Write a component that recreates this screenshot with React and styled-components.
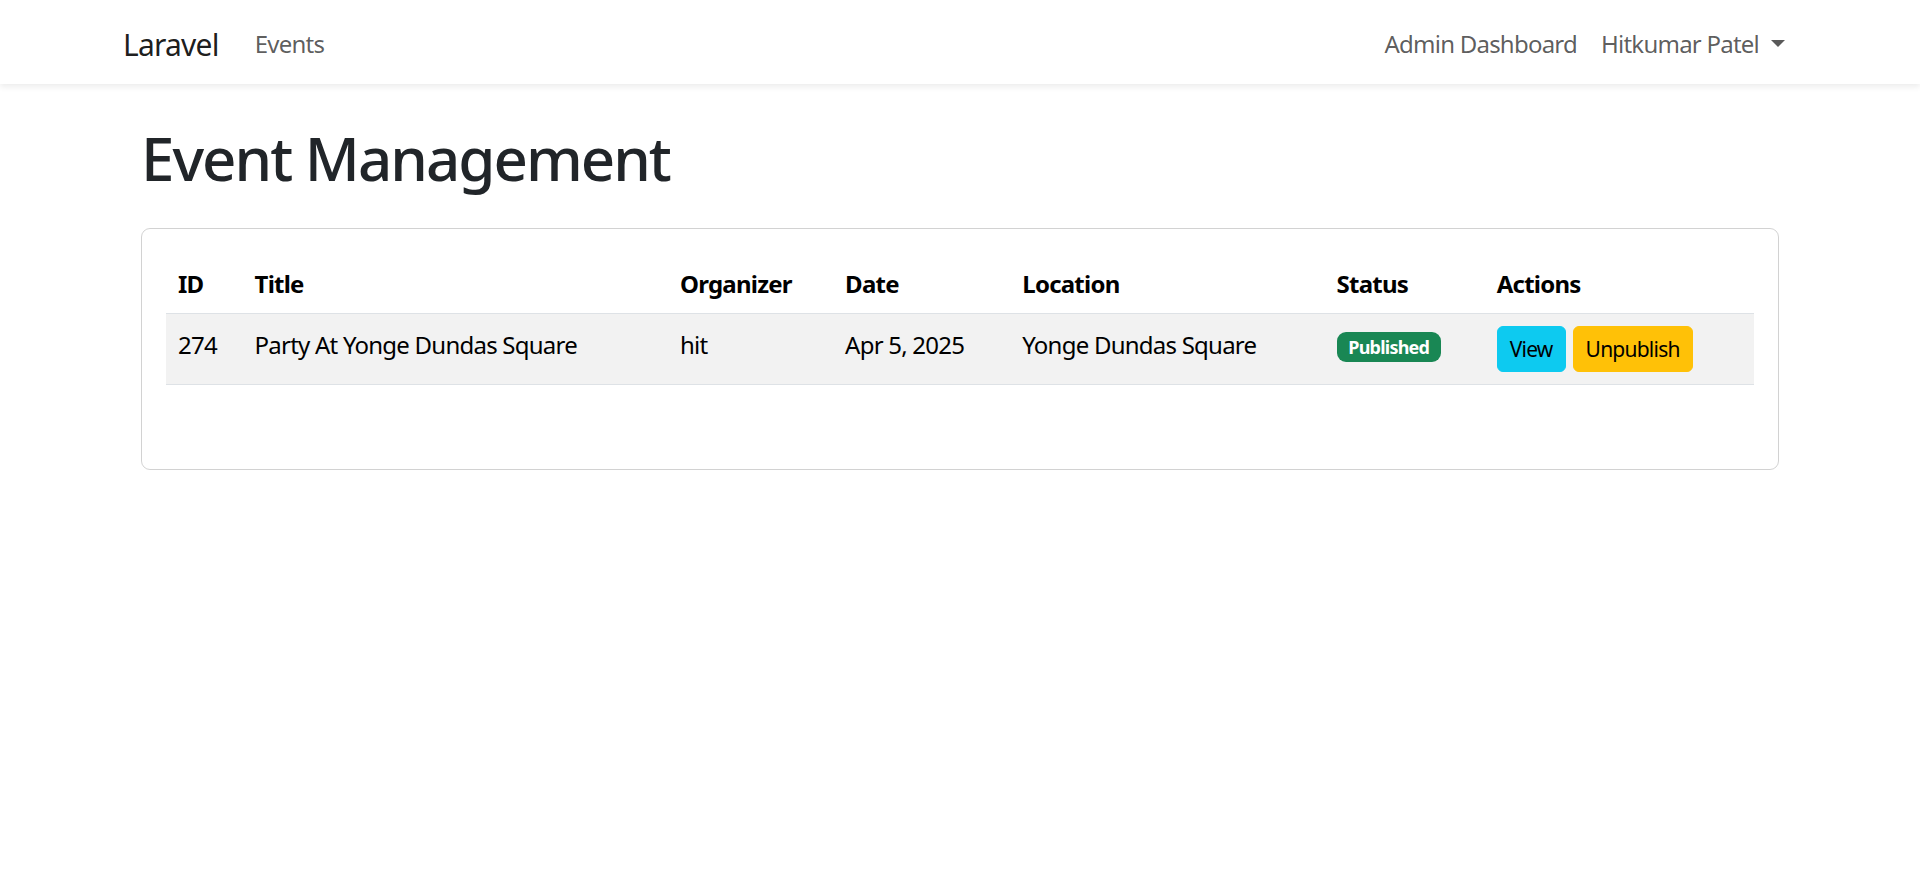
import React from 'react'
import styled, { createGlobalStyle } from 'styled-components';

const GlobalStyle = createGlobalStyle`
  * { box-sizing: border-box; }
  body {
    margin: 0;
    font-family: "Noto Sans", "Open Sans", Arial, sans-serif;
    font-size: 24px;
    line-height: 1.5;
    letter-spacing: -0.032em;
    color: #212529;
    background: #fff;
  }
`;

const Navbar = styled.nav`
  background: #fff;
  padding: 14px 0 10px;
  box-shadow: 0 3px 6px rgba(0, 0, 0, 0.075);
`;

const Container = styled.div`
  width: 100%;
  max-width: 1710px;
  margin: 0 auto;
  padding: 0 18px;
  display: ${p => (p.$flex ? 'flex' : 'block')};
  align-items: center;
  justify-content: space-between;
`;

const NavGroup = styled.div`
  display: flex;
  align-items: center;
`;

const Brand = styled.a`
  font-size: 30px;
  padding: 7.5px 0;
  margin-right: 24px;
  color: rgba(0, 0, 0, 0.9);
  text-decoration: none;
`;

const NavLink = styled.a`
  padding: 12px;
  color: rgba(0, 0, 0, 0.65);
  text-decoration: none;
  display: flex;
  align-items: center;
`;

const Caret = styled.span`
  display: inline-block;
  margin-left: 12px;
  margin-top: -2px;
  border-top: 7px solid;
  border-left: 7px solid transparent;
  border-right: 7px solid transparent;
`;

const Main = styled.main`
  padding: 36px 0;
`;

const Title = styled.h1`
  font-size: 60px;
  font-weight: 500;
  line-height: 1.2;
  letter-spacing: -0.033em;
  margin: 0 0 36px;
  padding-top: 2px;
  height: 72px;
`;

const Card = styled.div`
  border: 1px solid rgba(0, 0, 0, 0.175);
  border-radius: 9px;
  padding: 24px;
`;

const Table = styled.table`
  width: 100%;
  border-collapse: collapse;
  table-layout: fixed;
  color: #000;
  margin-bottom: 24px;
  vertical-align: top;
`;

const Th = styled.th`
  text-align: left;
  font-weight: 700;
  padding: 13px 12px 11px;
  border-bottom: 1px solid #dee2e6;
`;

const Row = styled.tr`
  background: ${p => (p.$striped ? '#f2f2f2' : 'transparent')};
`;

const Td = styled.td`
  padding: 12px;
  border-bottom: 1px solid #dee2e6;
  vertical-align: top;
`;

const Cell = styled.div`
  padding-top: 1px;
`;

const Badge = styled.span`
  display: inline-block;
  font-size: 18px;
  font-weight: 700;
  line-height: 1;
  padding: 6.3px 11.7px;
  border-radius: 9px;
  color: #fff;
  background: #198754;
`;

const Actions = styled.div`
  display: flex;
  gap: 7px;
`;

const Button = styled.button`
  font-family: inherit;
  letter-spacing: inherit;
  font-size: 21px;
  line-height: 1.5;
  padding: 7px 12px 5px;
  border: 1px solid ${p => p.$bg};
  border-radius: 6px;
  background: ${p => p.$bg};
  color: #000;
  cursor: pointer;
`;

const Pager = styled.div`
  height: 36px;
`;

const columns = [
  { label: 'ID', width: 76.5 },
  { label: 'Title', width: 425 },
  { label: 'Organizer', width: 165 },
  { label: 'Date', width: 177 },
  { label: 'Location', width: 314 },
  { label: 'Status', width: 160 },
  { label: 'Actions', width: 269 },
];

const events = [
  {
    id: 274,
    title: 'Party At Yonge Dundas Square',
    organizer: 'hit',
    date: 'Apr 5, 2025',
    location: 'Yonge Dundas Square',
    status: 'Published',
  },
];

function App() {
  return (
    <>
      <GlobalStyle />
      <Navbar>
        <Container $flex>
          <NavGroup>
            <Brand href="#">Laravel</Brand>
            <NavLink href="#">Events</NavLink>
          </NavGroup>
          <NavGroup>
            <NavLink href="#">Admin Dashboard</NavLink>
            <NavLink href="#">Hitkumar Patel<Caret /></NavLink>
          </NavGroup>
        </Container>
      </Navbar>
      <Main>
        <Container>
          <Container>
            <Title>Event Management</Title>
            <Card>
              <Table>
                <colgroup>
                  {columns.map(c => (
                    <col key={c.label} style={{ width: c.width }} />
                  ))}
                </colgroup>
                <thead>
                  <tr>
                    {columns.map(c => (
                      <Th key={c.label}>{c.label}</Th>
                    ))}
                  </tr>
                </thead>
                <tbody>
                  {events.map((ev, i) => (
                    <Row key={ev.id} $striped={i % 2 === 0}>
                      <Td><Cell>{ev.id}</Cell></Td>
                      <Td><Cell>{ev.title}</Cell></Td>
                      <Td><Cell>{ev.organizer}</Cell></Td>
                      <Td><Cell>{ev.date}</Cell></Td>
                      <Td><Cell>{ev.location}</Cell></Td>
                      <Td><Cell><Badge>{ev.status}</Badge></Cell></Td>
                      <Td>
                        <Actions>
                          <Button $bg="#0dcaf0">View</Button>
                          <Button $bg="#ffc107">Unpublish</Button>
                        </Actions>
                      </Td>
                    </Row>
                  ))}
                </tbody>
              </Table>
              <Pager />
            </Card>
          </Container>
        </Container>
      </Main>
    </>
  )
}

export default App
